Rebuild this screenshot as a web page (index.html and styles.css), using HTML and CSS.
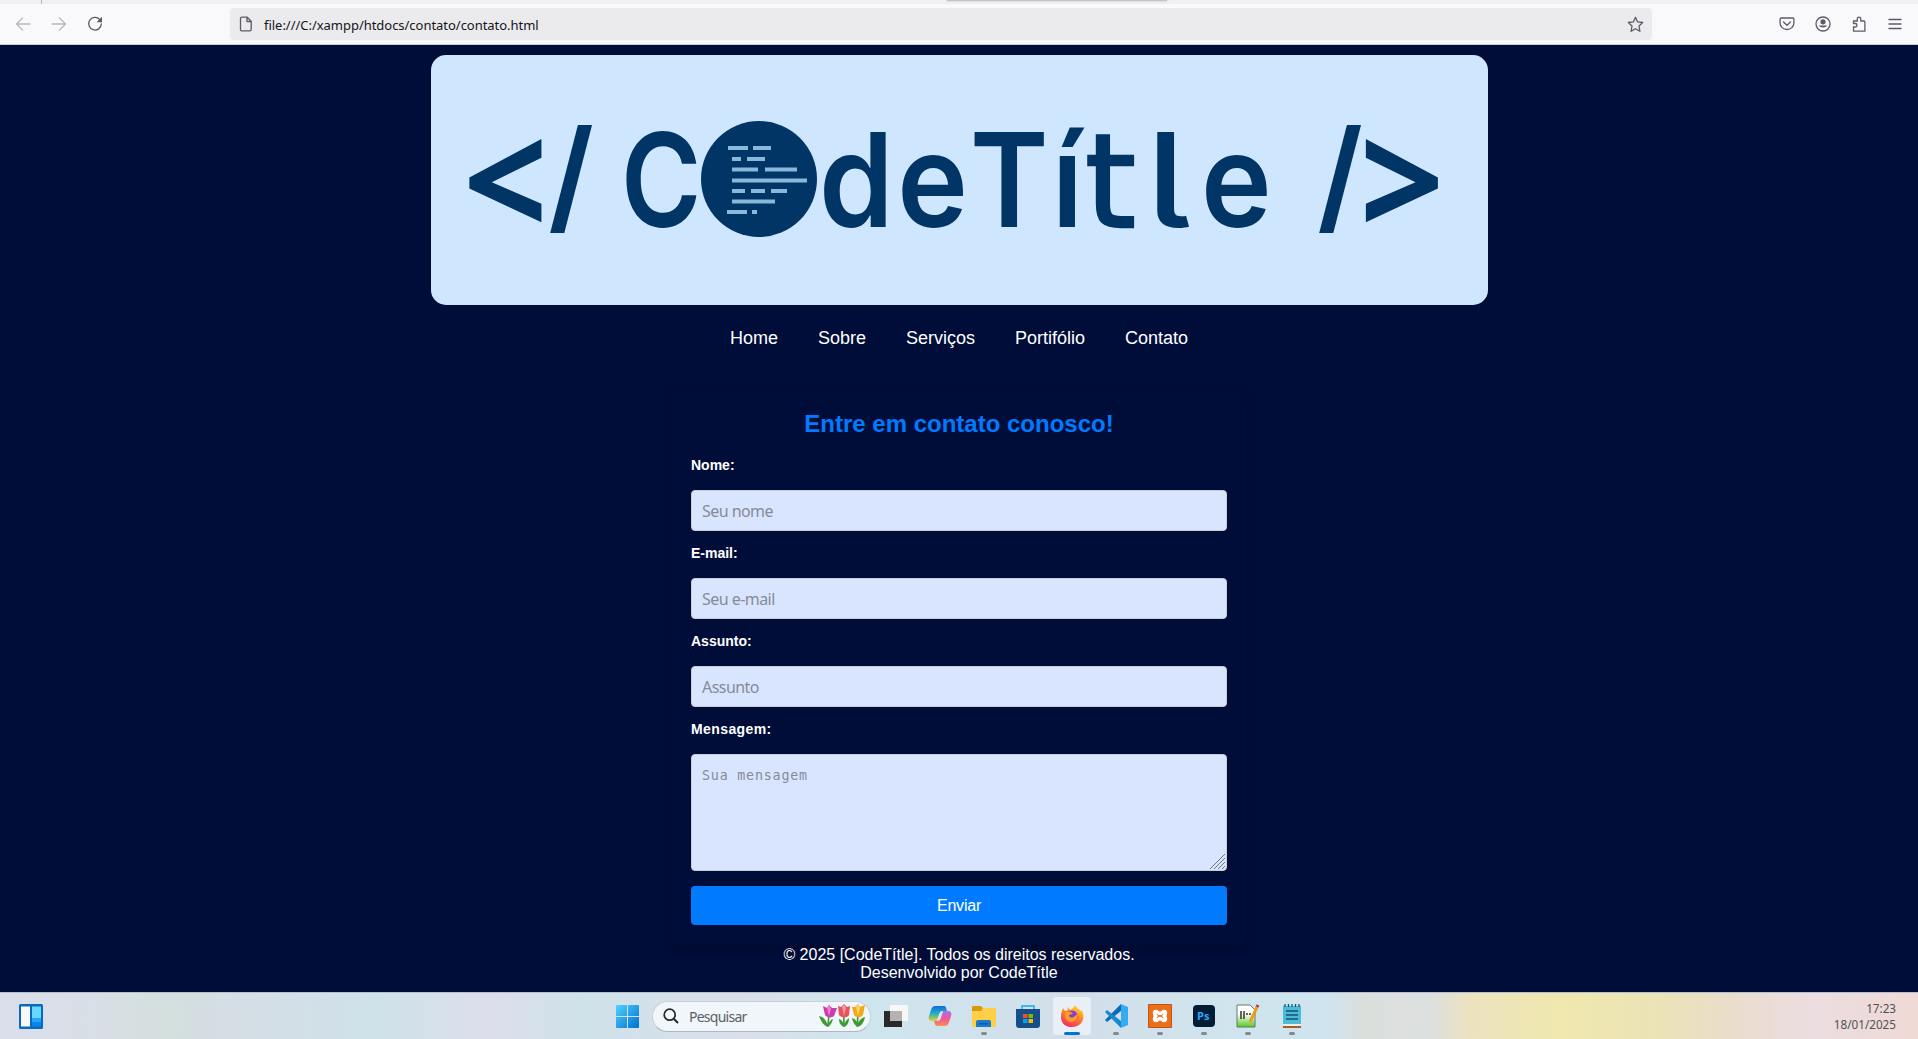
FILE: index.html
```html
<!DOCTYPE html>
<html lang="pt-br">
<head>
<meta charset="utf-8">
<title>Contato</title>
<link rel="stylesheet" href="styles.css">
</head>
<body>
<div class="tabstrip"><span class="tab-sep"></span><span class="drag-bar"></span></div>
<div class="toolbar">
  <div class="nav-buttons">
    <svg class="dim" width="16" height="16" viewBox="0 0 16 16"><path d="M15 8H1.5M7.5 2 1.5 8l6 6"/></svg>
    <svg class="dim" width="16" height="16" viewBox="0 0 16 16"><path d="M1 8h13.500M8.500 2l6 6-6 6"/></svg>
    <svg width="16" height="16" viewBox="0 0 16 16"><path d="M12.500 3.300A6.300 6.300 0 1 0 14.300 8"/><path class="solid" d="M15 .8v5.400H9.600z"/></svg>
  </div>
  <div class="urlbar">
    <svg width="16" height="16" viewBox="0 0 16 16"><path d="M3.800 1.200h5.400l4 4v8.300a1.300 1.300 0 0 1-1.300 1.300H3.800a1.300 1.300 0 0 1-1.300-1.300V2.500a1.300 1.300 0 0 1 1.300-1.300zM9 1.500v4h4"/></svg>
    <span class="url">file:///C:/xampp/htdocs/contato/contato.html</span>
    <svg class="star" width="17" height="17" viewBox="0 0 17 17"><path d="m8.500 1.300 2.100 4.600 5.100.6-3.700 3.500.9 5.300-4.400-2.600-4.400 2.600.9-5.300L1.300 6.500l5.100-.6z"/></svg>
  </div>
  <div class="tools">
    <svg width="16" height="16" viewBox="0 0 16 16"><path d="M2.200 2h11.600a1.100 1.100 0 0 1 1.100 1.100v4a6.900 6.400 0 0 1-13.800 0v-4A1.100 1.100 0 0 1 2.200 2zM4.500 6 8 9.300 11.500 6"/></svg>
    <svg width="16" height="16" viewBox="0 0 16 16"><circle cx="8" cy="8" r="7"/><circle class="solid" cx="8" cy="5.800" r="2.600"/><path class="solid" d="M3.600 9.500h8.800a4.800 3.500 0 0 1-8.800 0z"/></svg>
    <svg width="16" height="16" viewBox="0 0 16 16"><path d="M2.500 15.200V11h1.700a1.700 1.700 0 0 0 0-3.500H2.500V5h3.800V2.800a1.700 1.700 0 0 1 3.500 0V5h3.100a1 1 0 0 1 1 1v9.200z"/></svg>
    <svg width="16" height="16" viewBox="0 0 16 16"><path d="M2 3.500h12M2 8h12M2 12.500h12"/></svg>
  </div>
</div>

<div class="page">
  <header class="banner">
    <svg class="logo" width="1057" height="250" viewBox="0 0 1057 250">
      <text class="sign" transform="translate(32 183) scale(.94 1)">&lt;</text>
      <text class="slash" transform="translate(118.500 178) scale(.69 1)">/</text>
      <text class="word" transform="translate(190 172) scale(.84 1)">C</text>
      <circle cx="328" cy="124" r="58" fill="#003565"/>
      <path fill="#8ab8dc" d="M297 91h20v4h-20zM322 91h18v4h-18zM301 102h9v4h-9zM316 102h18v4h-18zM301 112.500h26v4h-26zM334 112.500h32v4h-32zM301 123.500h75v4h-75zM301 134h13v4h-13zM320 134h14v4h-14zM340 134h16v4h-16zM301 144.500h43v4h-43zM296 155h20v4h-20zM321 155h5v4h-5z"/>
      <text class="word" transform="translate(388 172) scale(.92 1)" x="0 85 164 253">deTí</text>
      <text class="word-t" x="654" y="172">t</text>
      <text class="word light" transform="translate(715 172) scale(1.200 1)">l</text>
      <text class="word" transform="translate(770 172) scale(.92 1)">e</text>
      <text class="slash" transform="translate(887.500 178) scale(.69 1)">/</text>
      <text class="sign" transform="translate(928.500 183) scale(.94 1)">&gt;</text>
    </svg>
  </header>
  <nav class="menu"><a>Home</a><a>Sobre</a><a>Serviços</a><a>Portifólio</a><a>Contato</a></nav>
  <form class="card">
    <h2>Entre em contato conosco!</h2>
    <label>Nome:</label><input type="text" placeholder="Seu nome">
    <label>E-mail:</label><input type="text" placeholder="Seu e-mail">
    <label>Assunto:</label><input type="text" placeholder="Assunto">
    <label class="wide">Mensagem:</label>
    <div class="message"><textarea placeholder="Sua mensagem"></textarea>
      <svg class="grip" width="15" height="15" viewBox="0 0 15 15"><path d="M0 15 15 0M4 15 15 4M8 15l7-7M12 15l3-3"/></svg>
    </div>
    <button type="button">Enviar</button>
  </form>
  <footer>© 2025 [CodeTítle]. Todos os direitos reservados.<br>Desenvolvido por CodeTítle</footer>
</div>

<div class="taskbar">
  <svg class="widgets" width="24" height="25" viewBox="0 0 24 25"><rect width="24" height="25" rx="1.500" fill="#0869bd"/><path d="M2 2.500h9v20H2z" fill="#f8f8f8"/><path d="M13 2.500h9V14h-9z" fill="#68d8ff"/><path d="M13 14h9v4.500h-9z" fill="#20a5fa"/><path d="M13 18.500h9v4h-9z" fill="#0785ee"/></svg>
  <div class="apps">
    <svg class="start" width="23" height="23" viewBox="0 0 23 23"><defs><linearGradient id="win" x1="0" y1="0" x2="1" y2="1"><stop offset="0" stop-color="#4fd1ff"/><stop offset="1" stop-color="#0070d0"/></linearGradient></defs><path fill="url(#win)" d="M1 0h10v11H0V1a1 1 0 0 1 1-1zM12 0h10a1 1 0 0 1 1 1v10H12zM0 12h11v11H1a1 1 0 0 1-1-1zM12 12h11v10a1 1 0 0 1-1 1H12z"/></svg>
    <div class="search">
      <svg width="16" height="16" viewBox="0 0 16 16"><circle cx="6.700" cy="6.700" r="5.500" fill="#f4f8fb" stroke="#262a2e" stroke-width="1.700"/><path d="m10.700 10.700 4.300 4.300" stroke="#262a2e" stroke-width="2"/></svg>
      <span>Pesquisar</span>
      <svg class="tulips" width="47" height="24" viewBox="0 0 47 24">
        <path fill="#3f9a35" d="M9 12h1.600l-1 11H8zM24 12h1.700v11H24zM38 12h1.700l-.7 11h-1.600zM9 23C4 21 2 17 0 12c5 1 8 5 9 11zM8 23c2-5 4-8 6-8-1 4-3 7-6 8zM25 23c-4-2-5-5-5-8 3 1 5 4 5 8zM25 23c0-4 2-7 5-9 0 5-2 8-5 9zM39 23c-4-2-5-5-6-9 4 1 6 5 6 9zM38 23c1-6 4-9 8-10-1 5-3 9-8 10z"/>
        <path fill="#cc3aae" d="M4 2l4 2 2-3 3 3 5 0-3 8c-2 2-7 2-9-1z"/><path fill="#e981ce" d="m8 4 2-3 2 4-2 7z"/>
        <path fill="#e6535c" d="M19 2l3 1 3-3 3 3 3-1-1 9c-1 3-8 3-10 0z"/><path fill="#f5949a" d="m23 3 2-3 2 4-2 8z"/>
        <path fill="#f0a91d" d="m33 3 3 0 3-3 2 3 5-2-2 10c-2 3-7 3-9 0z"/><path fill="#ffd05c" d="m37 3 2-3 2 4-2 8z"/>
      </svg>
    </div>
    <span class="app"><svg width="24" height="24" viewBox="0 0 24 24"><path fill="#292929" d="M0 7h18v16H0z"/><path fill="#f7f7f7" d="M6 1h18v16H6z"/><path fill="#b3b3b3" d="M6 7h12v10H6z"/></svg></span>
    <span class="app"><svg width="24" height="24" viewBox="0 0 24 24"><defs><linearGradient id="ca" x1="0" y1="0" x2="0" y2="1"><stop offset="0" stop-color="#1268db"/><stop offset=".5" stop-color="#22b0c7"/><stop offset="1" stop-color="#e9cf29"/></linearGradient><linearGradient id="cb" x1="0" y1="0" x2="0" y2="1"><stop offset="0" stop-color="#ac6cf0"/><stop offset=".55" stop-color="#ee5b92"/><stop offset="1" stop-color="#fa9350"/></linearGradient></defs><path fill="url(#ca)" d="M7 2h9c2 0 2 2 3 5h-4c-2 0-3 1-4 4l-2 6H4c-3 0-4-2-3-5l2-6c1-3 2-4 4-4z"/><path fill="url(#cb)" d="M17 22H9c-2 0-2-2-3-5h3c2 0 3-1 4-4l2-6h5c3 0 4 2 3 5l-2 6c-1 3-2 4-4 4z"/><path fill="#d6e5ee" d="m12 8 3-1-3 9-3 1z"/></svg></span>
    <span class="app run"><svg width="24" height="24" viewBox="0 0 24 24"><path fill="#d99a08" d="M0 3a1 1 0 0 1 1-1h8l3 3v4H0z"/><path fill="#ffcf48" d="M0 7h9l2-3h12a1 1 0 0 1 1 1v18H1a1 1 0 0 1-1-1z"/><path fill="#187bcb" d="M4 23v-5a2 2 0 0 1 2-2h11a2 2 0 0 1 2 2v5z"/><path fill="#0c5ba8" d="M7 19h9v1.500H7z"/></svg></span>
    <span class="app"><svg width="24" height="24" viewBox="0 0 24 24"><path fill="none" stroke="#35bdef" stroke-width="1.800" d="M6 6V2h12v4"/><path fill="#164e8c" d="M0 5h24v16a3 3 0 0 1-3 3H3a3 3 0 0 1-3-3z"/><path fill="#f25022" d="M7 10h4.500v4H7z"/><path fill="#7fba00" d="M12.500 10H17v4h-4.500z"/><path fill="#00a4ef" d="M7 15h4.500v4H7z"/><path fill="#ffb900" d="M12.500 15H17v4h-4.500z"/></svg></span>
    <span class="app active"><svg width="24" height="24" viewBox="0 0 24 24"><defs><linearGradient id="ff" x1=".8" y1="0" x2=".3" y2="1"><stop offset="0" stop-color="#ffe039"/><stop offset=".45" stop-color="#ff8a22"/><stop offset="1" stop-color="#f5286a"/></linearGradient></defs><path fill="url(#ff)" d="M3 4l2 3 3-1-1-3 4 3c2-2 3-4 5-5 0 3 3 4 5 6l1-1c4 10-1 17-10 17S-2 16 3 4z"/><circle cx="12" cy="12" r="5.500" fill="#833ed7"/><path fill="#ff9d23" d="M5 9c3-2 5-1 8 0-1 2-4 1-4 3 2 3 6 1 8-2 1 5-2 8-6 8s-7-4-6-9z"/></svg></span>
    <span class="app run"><svg width="24" height="24" viewBox="0 0 24 24"><path fill="#0b6bb5" d="M17 0v7L3 18l-2-2z"/><path fill="#1989cf" d="m17 24v-7L3 6 1 8z"/><path fill="#38aaf0" d="m17 0 7 3v18l-7 3z"/></svg></span>
    <span class="app run"><svg width="24" height="24" viewBox="0 0 24 24"><rect width="24" height="24" rx="2" fill="#e8701d"/><path fill="none" stroke="#c9530d" d="M.5.500h23v23H.5z"/><path d="M8 7.500c2 0 2 2 4 2s2-2 4-2 2 3 0 4.500c2 1.500 2 4.500 0 4.500s-2-2-4-2-2 2-4 2-2-3 0-4.500c-2-1.500-2-4.500 0-4.500z" fill="#e8701d" stroke="#fff" stroke-width="3.400" stroke-linejoin="round"/></svg></span>
    <span class="app run"><svg width="24" height="24" viewBox="0 0 24 24"><rect x="1" y="1" width="22" height="22" rx="4" fill="#001e36"/><text class="ps" x="5" y="16">Ps</text></svg></span>
    <span class="app run"><svg width="24" height="24" viewBox="0 0 24 24"><defs><linearGradient id="np" x1="0" y1="0" x2="0" y2="1"><stop offset=".4" stop-color="#fff"/><stop offset="1" stop-color="#56c820"/></linearGradient></defs><path fill="url(#np)" stroke="#6f746f" d="M1 1h13l5 5v17H1z"/><path fill="none" stroke="#333" stroke-width="1.500" d="M5 7v8M8 7v8M10 10h2M13 10h2"/><path stroke="#e6a018" stroke-width="3" d="m14 18 7-15"/><path stroke="#b63b36" stroke-width="3" d="m21 3 1-2"/></svg></span>
    <span class="app run"><svg width="24" height="24" viewBox="0 0 24 24"><path fill="#a95b20" d="M3 19h18v5H3z"/><path fill="#eee" d="M3 20h18v2H3z"/><path fill="#4dbbd7" d="M3 2h18v18H3z"/><path fill="none" stroke="#125372" stroke-width="1.300" d="M5 0v3M8.500 0v3M12 0v3M15.500 0v3M19 0v3M6 7h12M6 11h12M6 15h12"/></svg></span>
  </div>
  <div class="clock">17:23<br>18/01/2025</div>
</div>
</body>
</html>
```
FILE: styles.css
```css
* { box-sizing: border-box; }
body { margin: 0; width: 1918px; height: 1039px; overflow: hidden; display: flex; flex-direction: column; background: #000d39; color: #fff; font-family: "Liberation Sans", Arial, sans-serif; }
svg { display: block; flex: none; }

.tabstrip { height: 4px; background: #f0f0f4; display: flex; flex: none; }
.tab-sep { width: 1px; margin-left: 41px; background: #b5b5bb; }
.drag-bar { width: 220px; height: 1px; margin-left: 905px; background: #c4c4c8; box-shadow: 0 0 2px #aaa; }
.toolbar { height: 41px; flex: none; background: #f9f9fb; border-bottom: 1px solid #ccccd0; display: flex; align-items: center; padding: 0 15px 0 15px; }
.toolbar svg { fill: none; stroke: #5b5b66; stroke-width: 1.3; stroke-linecap: round; stroke-linejoin: round; }
.toolbar .solid { fill: #5b5b66; stroke: none; }
.toolbar .dim { stroke: #b9b9bf; }
.nav-buttons { display: flex; gap: 20px; width: 215px; }
.urlbar { width: 1422px; height: 32px; border-radius: 4px; background: #ebebed; display: flex; align-items: center; padding: 0 8px; }
.url { margin-left: 10px; padding-top: 1px; font: 13px "Noto Sans", sans-serif; letter-spacing: -.03px; color: #15141a; flex: 1; }
.tools { margin-left: auto; display: flex; gap: 20px; }

.page { flex: 1; display: flex; flex-direction: column; align-items: center; padding-top: 10px; }
.banner { width: 1057px; height: 250px; border-radius: 15px; background: #cfe6ff; flex: none; }
.logo text { fill: #003565; }
.word { font: 600 130px Inter, sans-serif; font-feature-settings: "cv05"; }
.light { font-weight: 500; }
.word-t { font: 130px "DejaVu Sans", sans-serif; stroke: #003565; stroke-width: 2.5px; }
.sign { font: 700 158px "Open Sans", sans-serif; }
.slash { font: 700 151px "Open Sans", sans-serif; }
.menu { display: flex; gap: 40px; font-size: 18px; line-height: 20px; margin-top: 23px; }
.card { width: 576px; height: 555px; margin-top: 42px; padding: 20px; border-radius: 8px; display: flex; flex-direction: column; box-shadow: 0 4px 8px rgba(0, 0, 0, .2); flex: none; }
h2 { margin: 0 0 20px; font-size: 24px; line-height: 27px; text-align: center; color: #007bff; }
label { font-size: 14px; line-height: 16px; font-weight: bold; margin-bottom: 17px; }
.wide { letter-spacing: .4px; }
input, textarea { display: block; width: 100%; border: 1px solid #ccc; border-radius: 4px; background: #d9e5fe; margin: 0; padding: 10px; }
input { height: 41px; flex: none; font: 16px "Noto Sans", sans-serif; letter-spacing: -.55px; margin-bottom: 14px; }
input::placeholder, textarea::placeholder { color: #858b98; opacity: 1; }
.message { position: relative; height: 117px; margin-bottom: 15px; flex: none; }
textarea { height: 117px; resize: none; padding-top: 11px; font: 13.33px/20px "DejaVu Sans Mono", monospace; letter-spacing: .8px; }
.grip { position: absolute; right: 2px; bottom: 2px; stroke: #707786; fill: none; }
button { height: 39px; flex: none; border: 0; border-radius: 4px; background: #007bff; color: #fff; font: 16px "Liberation Sans", Arial, sans-serif; letter-spacing: -.2px; }
footer { font-size: 16px; line-height: 18px; text-align: center; margin-top: 1px; }

.taskbar { height: 47px; flex: none; display: flex; align-items: center; padding: 0 22px 0 19px; border-top: 1px solid #b5bfce; background: linear-gradient(90deg, #dadeeb 0, #d9dfe6 90px, #d4dfde 160px, #d5dee5 240px, #cfe2ea 380px, #dcdeea 490px, #cfe2ea 580px, #d9dfea 740px, #cfe5ed 870px, #d3dfea 1080px, #cfe5ee 1250px, #cfe4ee 1330px, #dbdfdc 1360px, #dcdfdf 1430px, #ece2bf 1470px, #f0e8ae 1560px, #ebe2b6 1660px, #eadcce 1740px, #ebdde0 1810px, #efd9d5 1918px); }
.apps { display: flex; align-items: center; margin-left: 573px; }
.search { width: 219px; height: 31px; margin: 0 3px 0 13px; border-radius: 16px; background: #f1f6fa; border: 1px solid #c5d2dc; border-bottom-color: #aabac5; display: flex; align-items: center; padding: 0 4px 0 10px; }
.search span { flex: 1; margin-left: 10px; font: 14px "Noto Sans", sans-serif; letter-spacing: -.75px; color: #5b6065; }
.app { width: 38px; height: 38px; margin: 0 3px; border-radius: 4px; display: flex; flex-direction: column; align-items: center; padding-top: 7px; }
.app::after { content: ""; height: 3px; width: 0; margin-top: 4px; border-radius: 2px; background: #85898e; }
.run::after { width: 6px; }
.active { background: #e9eff6; }
.active::after { width: 16px; background: #0075d3; }
.ps { font: 700 11px "Open Sans", sans-serif; fill: #31a8ff; }
.clock { margin-left: auto; text-align: right; font: 11.700px/16px "Noto Sans", sans-serif; letter-spacing: 0; color: #505058; }
```
